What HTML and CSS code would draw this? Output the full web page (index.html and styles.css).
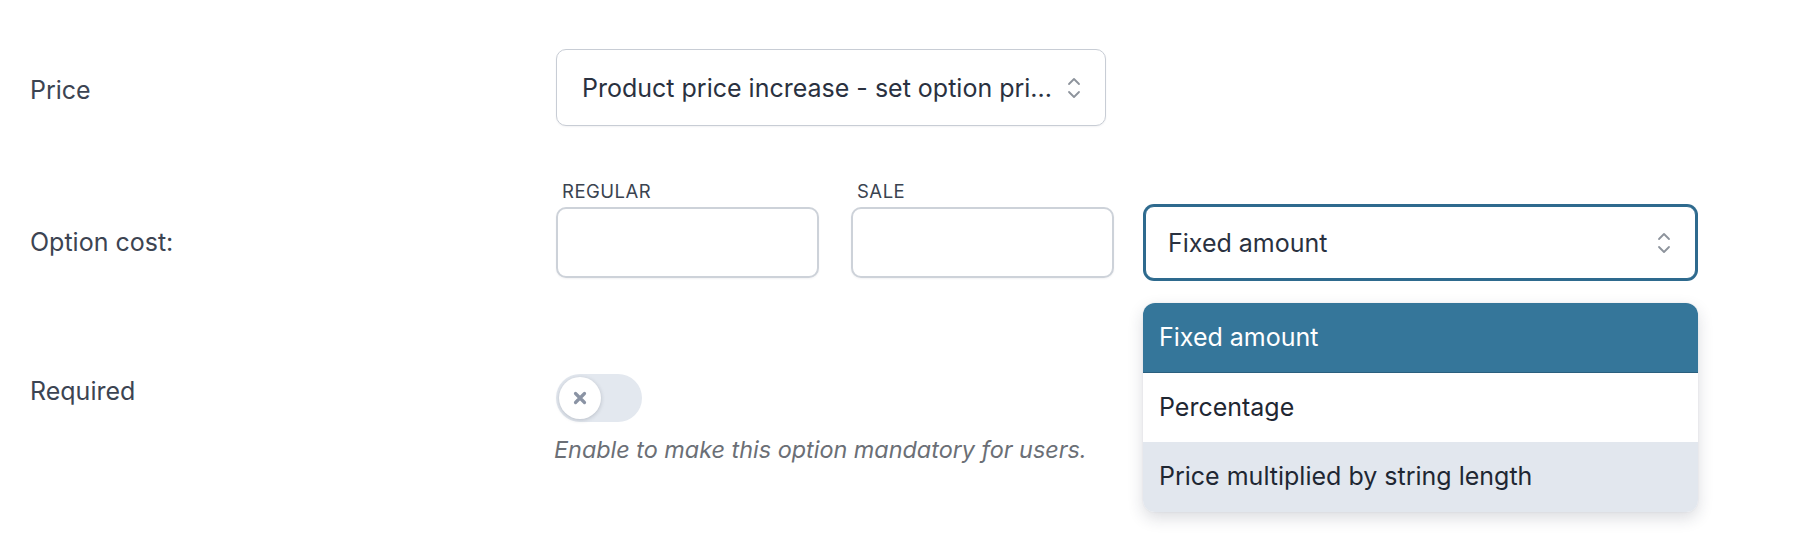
FILE: index.html
```html
<!DOCTYPE html>
<html lang="en">
<head>
<meta charset="utf-8">
<title>Option settings</title>
<link rel="stylesheet" href="styles.css">
</head>
<body>
<div class="form">
  <div class="row row-price">
    <div class="label label-price">Price</div>
    <div class="control">
      <div class="select select-price">
        <span class="select-text">Product price increase - set option pri...</span>
        <svg class="chev" viewBox="0 0 14 26" width="14" height="26" aria-hidden="true"><path d="M2 9 L7 4 L12 9 M2 17 L7 22 L12 17" fill="none" stroke="#8d939c" stroke-width="1.8" stroke-linecap="round" stroke-linejoin="round"/></svg>
      </div>
    </div>
  </div>

  <div class="row row-cost">
    <div class="label label-cost">Option cost:</div>
    <div class="control cost-fields">
      <div class="field">
        <div class="sublabel">REGULAR</div>
        <div class="input"></div>
      </div>
      <div class="field">
        <div class="sublabel">SALE</div>
        <div class="input"></div>
      </div>
      <div class="field field-type">
        <div class="select select-type">
          <span class="select-text">Fixed amount</span>
          <svg class="chev" viewBox="0 0 14 26" width="14" height="26" aria-hidden="true"><path d="M2 9 L7 4 L12 9 M2 17 L7 22 L12 17" fill="none" stroke="#8d939c" stroke-width="1.8" stroke-linecap="round" stroke-linejoin="round"/></svg>
        </div>
        <ul class="menu">
          <li class="menu-item is-selected">Fixed amount</li>
          <li class="menu-item">Percentage</li>
          <li class="menu-item is-hover">Price multiplied by string length</li>
        </ul>
      </div>
    </div>
  </div>

  <div class="row row-required">
    <div class="label label-required">Required</div>
    <div class="control">
      <div class="toggle">
        <span class="knob">
          <svg viewBox="0 0 14 14" width="14" height="14" aria-hidden="true"><path d="M2.5 2.5 L11.5 11.5 M11.5 2.5 L2.5 11.5" stroke="#8a93a4" stroke-width="3.2" stroke-linecap="round"/></svg>
        </span>
      </div>
      <p class="help">Enable to make this option mandatory for users.</p>
    </div>
  </div>
</div>
</body>
</html>
```

FILE: styles.css
```css
* { box-sizing: border-box; }
html, body { margin: 0; padding: 0; background: #ffffff; }
body {
  min-height: 553px;
  font-family: Inter, "Noto Sans", "Liberation Sans", sans-serif;
  color: #3a4350;
}
.form { padding: 49px 0 0 0; }
.row {
  display: grid;
  grid-template-columns: 556px 1fr;
}
.label {
  padding-left: 30px;
  font-size: 25px;
  color: #3c4452;
}
.label-price { height: 77px; line-height: 77px; padding-top: 3px; }
.label-cost { align-self: end; line-height: 71px; padding-top: 2px; }
.label-required { line-height: 34px; }

.select {
  display: flex;
  align-items: center;
  justify-content: space-between;
  background: #fff;
  border: 1.5px solid #c8cdd5;
  border-radius: 10px;
  font-size: 25px;
  color: #2a3140;
  white-space: nowrap;
}
.select-price {
  width: 550px;
  height: 77px;
  padding: 0 24px 0 25px;
  box-shadow: 0 1px 2px rgba(30, 40, 60, 0.06);
}
.chev { flex: none; margin-left: 8px; }

.row-cost { margin-top: 55px; }
.cost-fields {
  display: flex;
  align-items: flex-end;
  gap: 32px;
}
.field { display: flex; flex-direction: column; }
.sublabel {
  font-size: 18.5px;
  line-height: 20px;
  letter-spacing: 0.5px;
  color: #3a4350;
  padding-left: 6px;
  margin-bottom: 6px;
}
.input {
  width: 263px;
  height: 71px;
  border: 2px solid #cdd2d9;
  border-radius: 10px;
  background: #fff;
  box-shadow: 0 1px 2px rgba(30, 40, 60, 0.06);
}
.field-type { position: relative; margin-left: -1px; }
.select-type {
  width: 551px;
  height: 73px;
  margin-bottom: -1px;
  padding: 0 24px 0 22px;
  border: 1.5px solid #2e6a8e;
  box-shadow: 0 0 0 2px #2e6a8e;
  border-radius: 9px;
}

.menu {
  position: absolute;
  top: 97px;
  left: -2px;
  width: 555px;
  margin: 0;
  padding: 0;
  list-style: none;
  background: #fff;
  border-radius: 12px;
  overflow: hidden;
  box-shadow: 0 6px 16px rgba(30, 40, 60, 0.16), 0 0 2px rgba(30, 40, 60, 0.08);
  z-index: 2;
}
.menu-item {
  height: 69.5px;
  line-height: 69px;
  padding-left: 16px;
  font-size: 25px;
  color: #1f2733;
}
.menu-item.is-selected {
  background: #35769a;
  color: #fff;
  border-bottom: 1px solid #2a5f7e;
}
.menu-item.is-hover { background: #e2e7ee; }

.row-required { margin-top: 96px; }
.toggle {
  width: 86px;
  height: 48px;
  border-radius: 24px;
  background: #e3e8ef;
  padding: 3px;
}
.knob {
  display: flex;
  align-items: center;
  justify-content: center;
  width: 42px;
  height: 42px;
  border-radius: 50%;
  background: #fff;
  box-shadow: 0 1px 4px rgba(30, 40, 60, 0.22);
}
.help {
  margin: 13px 0 0 -2px;
  font-size: 23.4px;
  line-height: 30px;
  font-style: italic;
  color: #6b6f76;
}
```
